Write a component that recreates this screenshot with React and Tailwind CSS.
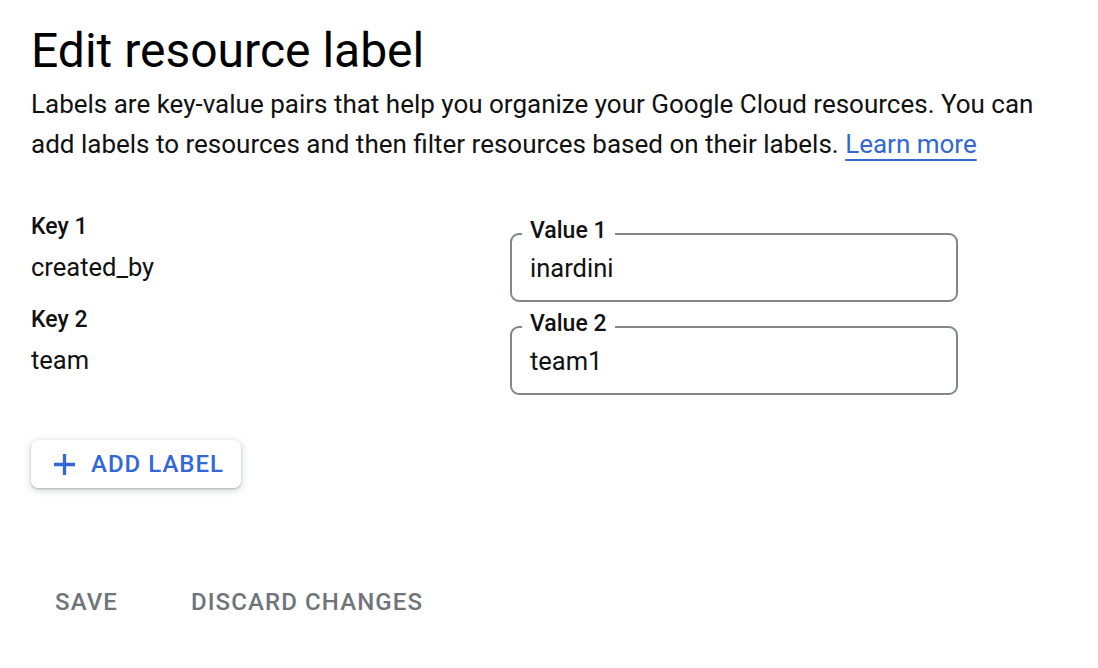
import React from "react";

const rows = [
  { key: "Key 1", keyVal: "created_by", label: "Value 1", value: "inardini" },
  { key: "Key 2", keyVal: "team", label: "Value 2", value: "team1" },
];

export default function App() {
  return (
    <div
      className="w-[1098px] h-[668px] bg-white text-[#111111] pl-[31px] pt-[23px]"
      style={{ fontFamily: "Roboto, 'Liberation Sans', sans-serif" }}
    >
      <h1 className="text-[48px] leading-[56px] font-normal text-black">Edit resource label</h1>
      <p className="mt-[5px] text-[26px] leading-[40px]">
        Labels are key-value pairs that help you organize your Google Cloud resources. You can
        <br />
        add labels to resources and then filter resources based on their labels.{" "}
        <a className="text-[#3367d6] underline decoration-2 underline-offset-[6px]" href="#">
          Learn more
        </a>
      </p>

      <div className="mt-[47px] flex flex-col">
        {rows.map((r) => (
          <div key={r.key} className="flex h-[93px]">
            <div className="w-[479px]">
              <div className="text-[23px] leading-[32px] font-medium">{r.key}</div>
              <div className="mt-[6px] text-[25.5px] leading-[36px]">{r.keyVal}</div>
            </div>
            <div className="relative mt-[22px] w-[448px] h-[69px] rounded-[9px] border-2 border-[#80868b] flex items-center px-[18px]">
              <span className="absolute left-[10px] -top-[16px] bg-white px-2 text-[23px] leading-[24px] font-medium">
                {r.label}
              </span>
              <span className="text-[25.5px] leading-[36px]">{r.value}</span>
            </div>
          </div>
        ))}
      </div>

      <button className="mt-[43px] flex items-center h-[48px] w-[210px] rounded-[7px] bg-white pl-[22px] gap-[15px] shadow-[0_1px_2px_0_rgba(60,64,67,0.3),0_2px_6px_2px_rgba(60,64,67,0.15)]">
        <svg width="23" height="23" viewBox="0 0 23 23">
          <path d="M11.5 1v21M1 11.5h21" stroke="#3367d6" strokeWidth="3.3" fill="none" />
        </svg>
        <span className="text-[24px] leading-[28px] font-medium tracking-[1px] text-[#3367d6]">ADD LABEL</span>
      </button>

      <div className="mt-[94px] flex gap-[25px]">
        <button className="px-6 h-[40px] text-[24px] font-medium tracking-[1.1px] text-[#70757a]">SAVE</button>
        <button className="px-6 h-[40px] text-[24px] font-medium tracking-[1.1px] text-[#70757a]">DISCARD CHANGES</button>
      </div>
    </div>
  );
}
